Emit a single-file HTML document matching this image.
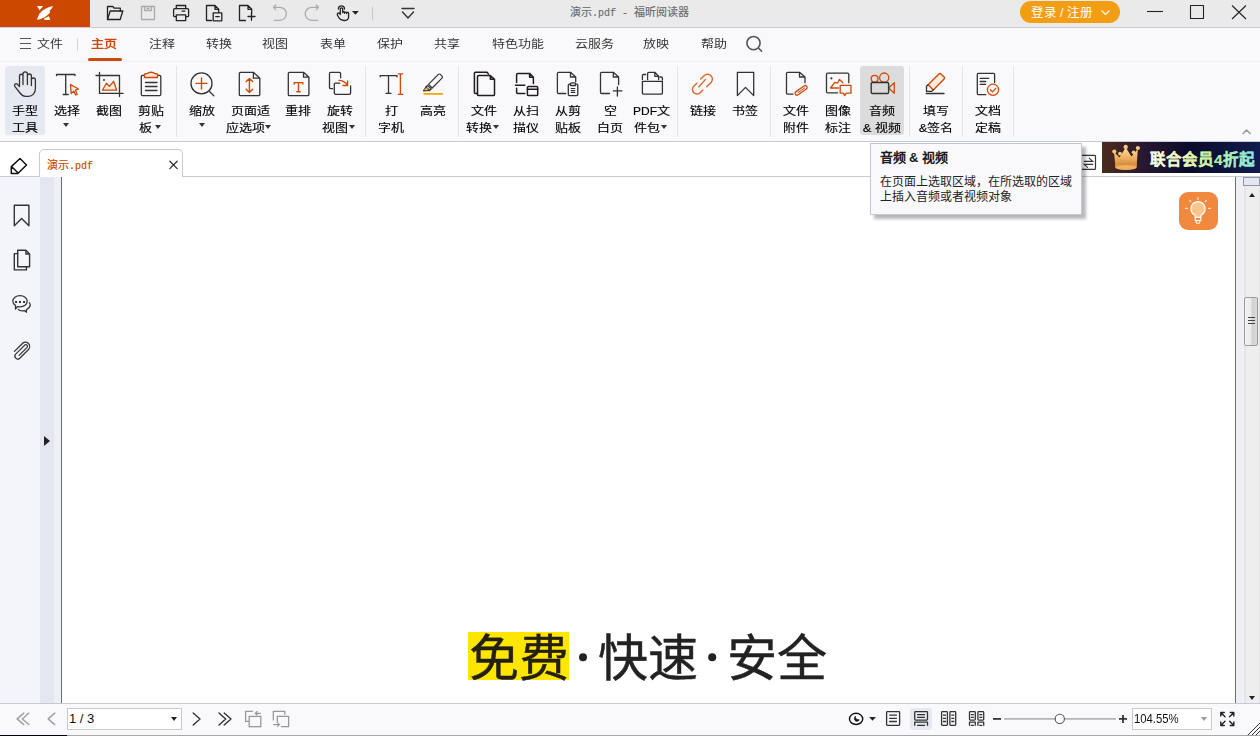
<!DOCTYPE html>
<html lang="zh-CN">
<head>
<meta charset="utf-8">
<style>
*{box-sizing:border-box;margin:0;padding:0}
html,body{width:1260px;height:736px;overflow:hidden;background:#f9f9fb;font-family:"Liberation Sans",sans-serif;color:#222}
.a{position:absolute}
#title{left:0;top:0;width:1260px;height:27px;background:#eaeaea}
#logo{left:0;top:0;width:90px;height:27px;background:#cc4800}
#tline{left:0;top:27px;width:1260px;height:1px;background:#c8ccd6}
#menu{left:0;top:28px;width:1260px;height:33px;background:#f9f9fb}
.mi{position:absolute;top:36px;font-size:13px;line-height:17px;color:#333;white-space:nowrap;font-weight:500;transform:scaleY(0.86)}
#ribbon{left:0;top:62px;width:1260px;height:79px;background:#f9f9fb}
#rline{left:0;top:141px;width:1260px;height:1px;background:#c5cad6}
.hl{position:absolute;top:66px;height:69px;border-radius:3px}
.sep{position:absolute;top:66px;width:1px;height:71px;background:#e3e5ea}
.lb{position:absolute;width:80px;text-align:center;font-size:13px;line-height:17px;color:#000;white-space:nowrap;font-weight:500;transform:scaleY(0.86);-webkit-text-stroke:0.15px #000}
.dd{position:absolute;width:0;height:0;border-left:3.5px solid transparent;border-right:3.5px solid transparent;border-top:4px solid #333}
#tabrow{left:0;top:142px;width:1260px;height:35px;background:#fff}
#tab{left:39px;top:149px;width:144px;height:28px;background:#fff;border:1px solid #c5cbd8;border-bottom:none;border-radius:5px 5px 0 0}
#tabline{left:0;top:176px;width:39px;height:1px;background:#c5cbd8}
#tabline2{left:183px;top:176px;width:1077px;height:1px;background:#c5cbd8}
#lpanel{left:0;top:177px;width:40px;height:526px;background:#f4f5fa}
#lcol{left:40px;top:177px;width:14px;height:526px;background:#e4e7f0}
#lcol2{left:54px;top:177px;width:7px;height:526px;background:#eff0f5}
#pline{left:61px;top:177px;width:1px;height:526px;background:#6e6e6e}
#page{left:62px;top:177px;width:1173px;height:526px;background:#fff}
#pline2{left:1235px;top:177px;width:1px;height:526px;background:#6e6e6e}
#rcol{left:1236px;top:177px;width:7px;height:526px;background:#eff0f5}
#sb{left:1243px;top:177px;width:17px;height:526px;background:linear-gradient(90deg,#f4f4f6 0,#f4f4f6 1px,#e4e4e4 1px,#e4e4e4 3px,#eeeeee 3px,#eeeeee 16px,#e6e6e6 16px)}
#status{left:0;top:703px;width:1260px;height:33px;background:#f9f9fb;border-top:1px solid #c5cad6}
#bot{left:67px;top:735px;width:1193px;height:1px;background:#a8a8a8}
#bot0{left:0;top:735px;width:67px;height:1px;background:#000010}
</style>
</head>
<body>
<div class="a" id="title"></div>
<div class="a" id="logo"></div>
<div class="a" id="tline"></div>
<div class="a" style="left:0;top:28px;width:1260px;height:1px;background:#fff"></div>
<div class="a" id="menu"></div>
<div class="a" id="ribbon"></div>
<div class="a" id="rline"></div>
<div class="a" id="tabrow"></div>
<div class="a" id="tabline"></div>
<div class="a" id="tabline2"></div>
<div class="a" id="tab"></div>
<div class="a" id="lpanel"></div>
<div class="a" id="lcol"></div>
<div class="a" id="lcol2"></div>
<div class="a" id="pline"></div>
<div class="a" id="page"></div>
<div class="a" id="pline2"></div>
<div class="a" id="rcol"></div>
<div class="a" id="sb"></div>
<div class="a" id="status"></div>
<div class="a" id="bot0"></div>
<div class="a" id="bot"></div>
<div class="hl" style="left:5px;width:40px;background:#e6e9f1"></div>
<div class="hl" style="left:860px;width:44px;background:#dcdcdc"></div>
<div class="lb" style="left:-15px;top:103px">手型</div>
<div class="lb" style="left:-15px;top:120px">工具</div>
<div class="lb" style="left:27px;top:103px">选择</div>
<div class="lb" style="left:69px;top:103px">截图</div>
<div class="lb" style="left:111px;top:103px">剪贴</div>
<div class="lb" style="left:162px;top:103px">缩放</div>
<div class="lb" style="left:210px;top:103px">页面适</div>
<div class="lb" style="left:258px;top:103px">重排</div>
<div class="lb" style="left:300px;top:103px">旋转</div>
<div class="lb" style="left:351px;top:103px">打</div>
<div class="lb" style="left:351px;top:120px">字机</div>
<div class="lb" style="left:393px;top:103px">高亮</div>
<div class="lb" style="left:444px;top:103px">文件</div>
<div class="lb" style="left:486px;top:103px">从扫</div>
<div class="lb" style="left:486px;top:120px">描仪</div>
<div class="lb" style="left:528px;top:103px">从剪</div>
<div class="lb" style="left:528px;top:120px">贴板</div>
<div class="lb" style="left:570px;top:103px">空</div>
<div class="lb" style="left:570px;top:120px">白页</div>
<div class="lb" style="left:611.5px;top:103px"><span style="font-size:12px;font-weight:400">PDF</span>文</div>
<div class="lb" style="left:663px;top:103px">链接</div>
<div class="lb" style="left:705px;top:103px">书签</div>
<div class="lb" style="left:756px;top:103px">文件</div>
<div class="lb" style="left:756px;top:120px">附件</div>
<div class="lb" style="left:798px;top:103px">图像</div>
<div class="lb" style="left:798px;top:120px">标注</div>
<div class="lb" style="left:842px;top:103px">音频</div>
<div class="lb" style="left:842px;top:120px">&amp; 视频</div>
<div class="lb" style="left:896px;top:103px">填写</div>
<div class="lb" style="left:896px;top:120px">&amp;签名</div>
<div class="lb" style="left:948px;top:103px">文档</div>
<div class="lb" style="left:948px;top:120px">定稿</div>
<div class="lb" style="left:139px;top:120px;width:auto;text-align:left">板</div>
<div class="dd" style="left:155px;top:125px"></div>
<div class="lb" style="left:226px;top:120px;width:auto;text-align:left">应选项</div>
<div class="dd" style="left:265px;top:125px"></div>
<div class="lb" style="left:322px;top:120px;width:auto;text-align:left">视图</div>
<div class="dd" style="left:349px;top:125px"></div>
<div class="lb" style="left:466px;top:120px;width:auto;text-align:left">转换</div>
<div class="dd" style="left:493px;top:125px"></div>
<div class="lb" style="left:634px;top:120px;width:auto;text-align:left">件包</div>
<div class="dd" style="left:661px;top:125px"></div>
<div class="dd" style="left:63px;top:123px"></div>
<div class="dd" style="left:199px;top:123px"></div>
<div class="mi" style="left:37px;color:#333">文件</div>
<div class="mi" style="left:91px;color:#c94a0a;font-weight:700">主页</div>
<div class="mi" style="left:149px;color:#333">注释</div>
<div class="mi" style="left:206px;color:#333">转换</div>
<div class="mi" style="left:262px;color:#333">视图</div>
<div class="mi" style="left:320px;color:#333">表单</div>
<div class="mi" style="left:377px;color:#333">保护</div>
<div class="mi" style="left:434px;color:#333">共享</div>
<div class="mi" style="left:491.5px;color:#333">特色功能</div>
<div class="mi" style="left:575px;color:#333">云服务</div>
<div class="mi" style="left:643px;color:#333">放映</div>
<div class="mi" style="left:701px;color:#333">帮助</div>
<div class="sep" style="left:176px"></div>
<div class="sep" style="left:365px"></div>
<div class="sep" style="left:458px"></div>
<div class="sep" style="left:677px"></div>
<div class="sep" style="left:770px"></div>
<div class="sep" style="left:909px"></div>
<div class="sep" style="left:962px"></div>
<div class="sep" style="left:1013px"></div>
<div class="a" style="left:1020px;top:1px;width:100px;height:22px;border-radius:11px;background:#f29d12"></div>
<div class="a" style="left:1030.5px;top:5px;font-size:12.5px;line-height:17px;color:#fff;white-space:nowrap">登录 / 注册</div>
<svg class="a" style="left:1100px;top:9px" width="12" height="8"><path d="M1.5,1.5 L5.5,5.5 L9.5,1.5" stroke="#fff" stroke-width="1.2" fill="none"/></svg>
<div class="a" style="left:570px;top:7px;font-size:11px;line-height:12px;color:#6a6a6a;white-space:nowrap;font-family:'Liberation Mono',monospace;-webkit-text-stroke:0.15px currentColor">演示<span style="font-size:10px">.pdf - </span>福昕阅读器</div>
<svg class="a" style="left:0;top:0" width="1260" height="736" viewBox="0 0 1260 736" fill="none" stroke-linecap="round" stroke-linejoin="round">
<!-- logo -->
<g fill="#fff" stroke="none">
<path d="M37.2,20 C38,14 42,8.5 53,6 C51.8,8.8 50.6,10.2 49.3,10.5 C50.2,11 50.3,12 49.5,13.2 C47,16 43,18.5 37.2,20 Z"/>
<path d="M37,6 H43.2 L39.6,10.3 Z"/>
<path d="M44,18.6 L48.8,16.2 L50.4,20 H44.6 Z"/>
</g>
<!-- titlebar icons -->
<g stroke="#222" stroke-width="1.3">
 <path d="M107.5,19.5 V6.5 H112.8 L114.3,8.2 H120.3 V11"/>
 <path d="M107.5,19.5 L110.2,11 H122.8 L120.2,19.5 Z"/>
</g>
<g stroke="#aaa" stroke-width="1.3"><rect x="141.5" y="6.5" width="13" height="13"/><path d="M144.5,6.5 V10.5 H151.5 V6.5"/><path d="M147,8.5 H149"/></g>
<g stroke="#222" stroke-width="1.3">
 <path d="M176.3,8.5 V5.5 H185.7 V8.5"/><rect x="173.6" y="8.6" width="15" height="8" rx="1.2"/><rect x="176.3" y="14.8" width="9.4" height="5.8" fill="#eaeaea"/><path d="M182.2,11.2 H184.8"/>
 <path d="M211.5,20.5 H206.5 V5.5 H215 L218.7,9.3 V12.5 M215,5.5 V9.3 H218.7"/><rect x="213.2" y="12.8" width="8.6" height="8"/><path d="M215.7,16.6 H219.3"/>
 <path d="M245.5,20.5 H239.5 V5.5 H248 L251.7,9.3 V13 M248,5.5 V9.3 H251.7"/><path d="M248,16.5 H255 M251.5,13 V20.3"/>
</g>
<g stroke="#aaa" stroke-width="1.3">
 <path d="M274.2,20.3 H279.9 A6.5,6.5 0 0 0 279.9,7.3 H273.5 M275.8,5 L273.5,7.3 L275.8,9.6"/>
 <path d="M317.8,20.3 H311.7 A6.5,6.5 0 0 1 311.7,7.3 H318.5 M316.2,5 L318.5,7.3 L316.2,9.6"/>
</g>
<g stroke="#222" stroke-width="1.3">
 <path d="M340.3,14.5 V9 A1.2,1.2 0 0 1 342.7,9 V12.8 M342.7,12.5 C342.7,11.4 344.6,11.4 344.6,12.5 V13.3 M344.6,12.8 C344.6,11.9 346.6,11.9 346.6,12.8 V13.5 M346.6,13 C346.6,12.1 348.6,12.1 348.6,13 V17 C348.6,19.2 346.5,20.5 344,20.5 C341.5,20.5 340,19.5 338.8,17.5 L337.4,15 C337,14 337.7,13 338.6,13 C339.3,13 339.8,13.5 340.3,14.5"/>
 <path d="M338.4,9 A3.05,3.05 0 0 1 344.5,9"/>
</g>
<path d="M352,11.1 H358.8 L355.4,14.8 Z" fill="#222"/>
<path d="M372.5,7 V20" stroke="#c8c8c8" stroke-width="1"/>
<g stroke="#333" stroke-width="1.4"><path d="M402,8.5 H414"/><path d="M402.5,12 L408,18 L413.5,12"/></g>
<!-- window controls -->
<g stroke="#222" stroke-width="1.1" stroke-linecap="butt">
<path d="M1147,11.5 H1163"/>
<rect x="1190.5" y="5.5" width="13" height="13"/>
<path d="M1232,5.5 L1246,19 M1246,5.5 L1232,19"/>
</g>
</svg>

<svg class="a" style="left:0;top:28px" width="130" height="34"><g stroke="#555" stroke-width="1.2"><path d="M20,10.5 H31 M20,15.5 H31 M20,20.5 H31"/></g><path d="M77.5,10 V23" stroke="#d5d5d8" stroke-width="1"/></svg>
<div class="a" style="left:88px;top:58px;width:34px;height:3px;border-radius:2px;background:#c94a0a"></div>
<div class="a" style="left:0;top:61px;width:1260px;height:1px;background:#f0f0f2"></div>
<svg class="a" style="left:0;top:0" width="1260" height="736" viewBox="0 0 1260 736" fill="none" stroke-linecap="round" stroke-linejoin="round">
<g stroke="#333" stroke-width="1.3">
<!-- hand -->
<path d="M19.5,86 V76 A1.75,1.75 0 0 1 23,76 V84.5 M23,84.5 V74 A2.2,2.2 0 0 1 27.4,74 V84.5 M27.4,84.5 V76 A2,2 0 0 1 31.4,76 V85.5 M31.4,80 A2,2 0 0 1 35.4,80 V88.5 C35.4,93 32.5,96.3 28.5,96.3 H25.5 C23,96.3 21.5,95 20,93 L14.8,86.3 C13.8,85 15.5,83 17,84 L19.5,86.5"/>
<!-- select T -->
<path d="M56.5,75.5 V74.5 H75 V75.5 M65.7,74.5 V94.5 M63.2,94.5 H68.2"/>
<!-- crop -->
<path d="M99.5,72.5 V93.4 H123 M96,75.5 H119.5 V96.5"/>
</g>
<circle cx="104" cy="80" r="1" fill="#333"/>
<path d="M70.5,84.5 L78.5,89 L75.5,90.2 L77.2,94.2 L75.7,95 L73.8,91.2 L71.2,93.5 Z" fill="#fde9da" stroke="#cc4a0a" stroke-width="1.3"/>
<path d="M102.4,90.2 L106.4,83.2 L109.4,86.4 L113.6,81.3 L116.7,90.2 Z" fill="#fdebdc" stroke="#cc4a0a" stroke-width="1.3"/>
<!-- clipboard -->
<g stroke="#333" stroke-width="1.3">
<path d="M144.3,75.3 H142.5 A1.2,1.2 0 0 0 141.3,76.5 V94.5 A1.2,1.2 0 0 0 142.5,95.6 H159.6 A1.2,1.2 0 0 0 160.8,94.5 V76.5 A1.2,1.2 0 0 0 159.6,75.3 H157.6"/>
<path d="M145.5,82.5 H157 M145.5,86.5 H157 M145.5,90.5 H157"/>
</g>
<path d="M144.5,74.5 C144.5,73.5 146.5,73.5 147.5,73.5 C148,72.2 149.5,72.2 151,72.2 C152.5,72.2 154,72.2 154.5,73.5 C155.5,73.5 157.5,73.5 157.5,74.5 V77.5 H144.5 Z" fill="#fde9da" stroke="#cc4a0a" stroke-width="1.4"/>
<!-- zoom -->
<g stroke="#333" stroke-width="1.3"><circle cx="201.5" cy="83.4" r="10.5"/><path d="M209.5,91.5 L213.8,95.7"/></g>
<path d="M196,83.4 H207 M201.5,78 V89" stroke="#cc4a0a" stroke-width="1.4"/>
<!-- page fit -->
<g stroke="#333" stroke-width="1.3">
<path d="M253.4,72.3 H240.5 A1.2,1.2 0 0 0 239.3,73.5 V94.4 A1.2,1.2 0 0 0 240.5,95.6 H258.6 A1.2,1.2 0 0 0 259.8,94.4 V78.2 Z M253.4,72.3 V78.2 H259.8"/>
<!-- reflow -->
<path d="M303.5,72.3 H289.5 A1.2,1.2 0 0 0 288.3,73.5 V94.4 A1.2,1.2 0 0 0 289.5,95.6 H307.7 A1.2,1.2 0 0 0 308.9,94.4 V77.2 Z M303.5,72.3 V77.2 H308.9"/>
<!-- rotate -->
<path d="M332.7,88.6 H330.7 A1.2,1.2 0 0 1 329.5,87.4 V73.5 A1.2,1.2 0 0 1 330.7,72.3 H339.4 A1.2,1.2 0 0 1 340.6,73.5 V77.8"/>
<path d="M339.7,83.2 H335.5 A1.2,1.2 0 0 0 334.3,84.4 V93.1 A1.2,1.2 0 0 0 335.5,94.3 H349.4 A1.2,1.2 0 0 0 350.6,93.1 V86"/>
</g>
<g stroke="#cc4a0a" stroke-width="1.4">
<path d="M249.4,78.5 V92.2 M246.2,81.6 L249.4,78.4 L252.6,81.6 M246.2,89.2 L249.4,92.4 L252.6,89.2"/>
<path d="M294.2,84 V82.6 H302.8 V84 M298.5,82.6 V91.8 M296.8,91.8 H300.2"/>
<path d="M339,80.4 C342.5,80.4 345.5,82.5 347.5,85.2 M347.6,81 V85.5 H343"/>
</g>
<!-- typewriter -->
<g stroke="#333" stroke-width="1.3"><path d="M380.2,76.8 V75.6 H397 V76.8 M388.5,75.6 V93.4 M386,93.4 H391"/></g>
<path d="M400.4,73.8 V94.4 M398.3,73.8 H402.8 M398.3,94.4 H402.8" stroke="#cc4a0a" stroke-width="1.3"/>
<!-- highlighter -->
<g stroke="#333" stroke-width="1.2">
<path d="M428.5,84.3 L438.3,74.4 A1.4,1.4 0 0 1 440.3,74.4 L442,76.1 A1.4,1.4 0 0 1 442,78.1 L432.2,88 Z"/>
<path d="M427.5,85.3 L431.2,89 L429.5,90.5 L426,87 Z"/>
<path d="M426,87 L423.5,90.8 L429.5,90.5"/>
</g>
<path d="M424.8,89.7 L427.3,88" stroke="#f0a000" stroke-width="1.2"/>
<path d="M423.5,93.9 H443" stroke="#f5a800" stroke-width="1.8" stroke-linecap="butt"/>
<!-- file convert -->
<g stroke="#221c1c" stroke-width="1.5">
<path d="M477.5,93.4 H475.4 A1,1 0 0 1 474.4,92.4 V73.3 A1,1 0 0 1 475.4,72.3 H487 L488.5,74"/>
<path d="M490.3,75.5 H478.7 A1.2,1.2 0 0 0 477.5,76.7 V94.4 A1.2,1.2 0 0 0 478.7,95.6 H493.3 A1.2,1.2 0 0 0 494.5,94.4 V79.3 Z M490.3,75.5 V79.3 H494.5"/>
<!-- scan -->
<path d="M516.6,82.6 V74.6 A1.2,1.2 0 0 1 517.8,73.4 H529.6 L533.4,77.2 V83.6 M529.6,73.4 V77.2 H533.4"/>
<path d="M515.5,85.3 H524.8 M516.6,88.3 V92.2 A1.2,1.2 0 0 0 517.8,93.4 H524.8"/>
<rect x="527.4" y="86.4" width="10.3" height="9.2" rx="1.2"/><path d="M527.4,89.3 H537.7"/>
</g>
<g stroke="#333" stroke-width="1.3">
<!-- from clipboard -->
<path d="M565.7,93.5 H558.6 A1.2,1.2 0 0 1 557.4,92.3 V73.5 A1.2,1.2 0 0 1 558.6,72.3 H570.5 L575.7,77 V81.8 M570.5,72.3 V77 H575.7"/>
<path d="M570,84.2 H569.3 A1,1 0 0 0 568.3,85.2 V94.6 A1,1 0 0 0 569.3,95.6 H576.8 A1,1 0 0 0 577.8,94.6 V85.2 A1,1 0 0 0 576.8,84.2 H576 M570.5,85.5 V83.8 A1,1 0 0 1 571.5,82.8 H574.5 A1,1 0 0 1 575.5,83.8 V85.5 Z"/>
<path d="M571.2,88.5 H574.8 M571.2,90.5 H574.8 M571.2,92.4 H574.8" stroke-width="1.1"/>
<!-- blank page -->
<path d="M609.5,93.5 H601.7 A1.2,1.2 0 0 1 600.5,92.3 V73.5 A1.2,1.2 0 0 1 601.7,72.3 H613.3 L618.6,77 V84.7 M613.3,72.3 V77 H618.6"/>
<path d="M613.3,90.9 H621.9 M617.4,87 V96"/>
<!-- pdf package -->
<path d="M645.7,74.5 H643.6 A1.2,1.2 0 0 0 642.4,75.7 V79.4 M647.6,79.5 V73.5 A1.2,1.2 0 0 1 648.8,72.3 H654.8 L658.6,76.3 V79.5 M654.8,72.3 V76.3 H658.6 M660,77 H661.2 A1.2,1.2 0 0 1 662.4,78.2 V80"/>
<path d="M642.4,81.3 H662.4 V93 A1.2,1.2 0 0 1 661.2,94.2 H643.6 A1.2,1.2 0 0 1 642.4,93 Z"/>
<!-- bookmark -->
<path d="M737.4,72.3 H753.7 V95.6 L745.5,87.4 L737.4,95.6 Z"/>
</g>
<!-- link -->
<g stroke="#d9692a" stroke-width="1.4">
<path d="M700.6,79.1 L704,75.7 A3.1,3.1 0 0 1 711,82.6 L706.8,86.7"/>
<path d="M696.8,83.2 L693.7,86.3 A3.1,3.1 0 0 0 700.4,92.6 L702.8,90"/>
<path d="M698.8,86.8 L705.6,79.4"/>
</g>
<!-- file attach -->
<g stroke="#333" stroke-width="1.3">
<path d="M792.9,94.2 H787.7 A1.2,1.2 0 0 1 786.5,93 V73.5 A1.2,1.2 0 0 1 787.7,72.3 H799.5 L805,77 V82.8 M799.5,72.3 V77 H805"/>
<!-- image annot -->
<path d="M837.6,92.8 H827.7 A1.2,1.2 0 0 1 826.5,91.6 V74.4 A1.2,1.2 0 0 1 827.7,73.2 H847.6 A1.2,1.2 0 0 1 848.8,74.4 V82.8"/>
</g>
<circle cx="831.4" cy="78.3" r="1.1" fill="#333"/>
<g stroke="#cc4a0a" stroke-width="1.3">
<path d="M796.0,91.65 L804.1,85.95 A1.9,1.9 0 0 1 806.3,89.05 L798.2,94.75 A1.9,1.9 0 0 1 796.0,91.65 Z"/>
<path d="M798,92.6 L804.6,88" stroke-width="1"/>
<path d="M838.6,88 H830.5 L834.8,82.3 L837.6,83.2 L839.5,79.4 L842.9,82.8"/>
<path d="M840.2,85.4 H851 V93.2 H846.2 L844.8,95.6 L843.4,93.2 H840.2 Z"/>
</g>
<!-- camera -->
<g stroke="#cc4a0a" stroke-width="1.3">
<circle cx="874.6" cy="78.8" r="3.4"/><circle cx="884.2" cy="77.6" r="4.6"/>
<path d="M888.6,88 L894.3,82.8 V93.2 Z"/>
</g>
<rect x="871.2" y="82.5" width="17.4" height="11" rx="1.2" fill="#d9d9d9" stroke="#333" stroke-width="1.4"/>
<!-- fill sign -->
<path d="M928.1,84.7 L938.9,73.9 A1.4,1.4 0 0 1 940.9,73.9 L944.1,77.1 A1.4,1.4 0 0 1 944.1,79.1 L933.3,89.9 Z" fill="#fdebdc" stroke="#cc4a0a" stroke-width="1.4"/>
<g stroke="#333" stroke-width="1.3">
<path d="M928.1,84.7 L926.5,86.3 V91.4 H931.7 L933.3,89.9"/>
<path d="M926.1,93.5 H944"/>
<!-- doc finalize -->
<path d="M985.8,94.6 H978.3 A1,1 0 0 1 977.3,93.6 V74.4 A1,1 0 0 1 978.3,73.4 H993.6 A1,1 0 0 1 994.6,74.4 V82.7"/>
<path d="M980.2,78.3 H988.8 M980.2,81.5 H985.6 M980.2,84.4 H985.6"/>
</g>
<g stroke="#cc4a0a" stroke-width="1.3"><circle cx="993" cy="89.8" r="5.6"/><path d="M990.4,89.8 L992.5,91.9 L995.8,88.4"/></g>
<!-- collapse chevron -->
<path d="M1243,133.5 L1246.6,130 L1250.2,133.5" stroke="#999" stroke-width="1.5"/>
</svg>

<!-- tab row content -->
<div class="a" style="left:47px;top:160px;font-size:11px;line-height:12px;color:#cc4a00;white-space:nowrap;font-family:'Liberation Mono',monospace;-webkit-text-stroke:0.2px currentColor">演示<span style="font-size:10px">.pdf</span></div>
<svg class="a" style="left:0;top:140px" width="200" height="40" fill="none" stroke-linecap="round" stroke-linejoin="round">
<path d="M20,18.5 L26.5,25 L17.9,33.5 H11.3 V26.6 Z M12,27 L17.9,32.7" stroke="#111" stroke-width="1.5"/>
<path d="M169.8,21.2 L177.2,28.6 M177.2,21.2 L169.8,28.6" stroke="#333" stroke-width="1.3"/>
</svg>
<!-- sidebar icons -->
<svg class="a" style="left:0;top:0" width="40" height="400" fill="none" stroke-linecap="round" stroke-linejoin="round">
<g stroke="#333" stroke-width="1.4">
<path d="M14.3,205.3 H28.9 V225.7 L21.6,218.4 L14.3,225.7 Z"/>
<path d="M17.7,253.6 H14.3 V269.9 H26.4 V266.8"/>
<path d="M25.9,250.3 H17.7 V266.8 H29.6 V254 Z M25.9,250.3 V254 H29.6"/>
</g>
<g stroke="#333" stroke-width="1.25">
<path d="M15.6,305.6 C13.6,304.4 12.8,302.8 12.8,301.3 C12.8,298 16,295.7 20,295.7 C24,295.7 27.2,298 27.2,301.3 C27.2,304.6 24,306.9 20,306.9 C19,306.9 18.2,306.8 17.5,306.6 L15.4,309 Z"/>
<path d="M29.4,302.8 C30,303.5 30.2,304.3 30.2,305 C30.2,306.8 28.8,308.4 26.5,309.5 L26.5,312.2 L24.6,310.6 C22.5,311 19.6,310.7 18.2,309.4"/>
<path d="M14.42,351.43 L22.42,343.44 A4.30,4.30 0 0 1 28.50,349.52 L19.80,358.22 A2.90,2.90 0 0 1 15.70,354.12 L24.75,345.07 A1.65,1.65 0 0 1 27.08,347.40 L19.16,355.32"/>
</g>
<g fill="#333"><rect x="15.1" y="301" width="2" height="2"/><rect x="19" y="301" width="2" height="2"/><rect x="23.1" y="301" width="2" height="2"/></g>
</svg>
<div class="a" style="left:44px;top:436px;width:0;height:0;border-top:5px solid transparent;border-bottom:5px solid transparent;border-left:6px solid #222"></div>
<!-- scrollbar -->
<div class="a" style="left:1243px;top:177px;width:17px;height:9px;background:#e4e7f0;border:1px solid #8f96aa"></div>
<div class="a" style="left:1249px;top:193px;width:0;height:0;border-left:3.5px solid transparent;border-right:3.5px solid transparent;border-bottom:4px solid #222"></div>
<div class="a" style="left:1249px;top:696px;width:0;height:0;border-left:3.5px solid transparent;border-right:3.5px solid transparent;border-top:4px solid #222"></div>
<div class="a" style="left:1244px;top:297px;width:14px;height:49px;border:1px solid #9a9a9a;border-radius:2px;background:linear-gradient(to right,#f4f4f4,#e9e9e9 50%,#d0d0d0 60%,#dadada)"></div>
<svg class="a" style="left:1244px;top:297px" width="14" height="49"><g stroke="#444" stroke-width="1"><path d="M4,20.5 H11 M4,23.5 H11 M4,26.5 H11"/></g></svg>
<!-- lightbulb -->
<div class="a" style="left:1179px;top:192px;width:39px;height:38px;border-radius:9px;background:#f0883e"></div>
<svg class="a" style="left:1179px;top:192px" width="39" height="38" fill="none" stroke-linecap="round">
<path d="M16.2,23.5 A7.2,7.2 0 1 1 21.8,23.5 V25.4 H16.2 Z" fill="#fdc48e" stroke="#fff" stroke-width="1.2" stroke-linejoin="round"/>
<rect x="16.2" y="25.4" width="5.6" height="3.1" fill="#f0883e" stroke="#fff" stroke-width="1.1"/>
<path d="M17.2,28.6 V30.3 Q17.2,31.3 18.2,31.3 H19.8 Q20.8,31.3 20.8,30.3 V28.6" stroke="#fff" stroke-width="1.1"/>
<g stroke="#ffe6cf" stroke-width="1.2"><path d="M19,5.5 V7.3 M10.7,8.5 L11.9,9.7 M27.3,8.5 L26.1,9.7 M6.5,16.3 H8.5 M29.5,16.3 H31.5"/></g>
</svg>
<!-- big text -->
<div class="a" style="left:468px;top:632px;width:101px;height:48px;background:#fee600"></div>
<div class="a" style="left:469px;top:626px;font-size:50px;line-height:66px;font-weight:500;-webkit-text-stroke:0.45px currentColor;color:#231f14;white-space:nowrap">免费</div>
<div class="a" style="left:598px;top:626px;font-size:50px;line-height:66px;font-weight:500;-webkit-text-stroke:0.45px currentColor;color:#222;white-space:nowrap">快速</div>
<div class="a" style="left:726.5px;top:626px;font-size:50px;line-height:66px;font-weight:500;-webkit-text-stroke:0.45px currentColor;color:#222;white-space:nowrap">安全</div>
<svg class="a" style="left:570px;top:645px" width="160" height="25"><circle cx="13" cy="12.3" r="4" fill="#222"/><circle cx="142.2" cy="12.3" r="4" fill="#222"/></svg>
<!-- banner -->
<div class="a" style="left:1102px;top:142px;width:158px;height:31px;background:linear-gradient(90deg,#4b2c1c 0%,#2a1830 25%,#0b0a2a 55%,#101c50 100%)"></div>
<svg class="a" style="left:1102px;top:142px" width="158" height="31">
<defs>
<linearGradient id="gold" x1="0" y1="0" x2="0" y2="1"><stop offset="0" stop-color="#ffdca0"/><stop offset="0.5" stop-color="#f0b060"/><stop offset="1" stop-color="#c87a30"/></linearGradient>
<linearGradient id="txt" x1="0" y1="0" x2="1" y2="0"><stop offset="0" stop-color="#f8f8f0"/><stop offset="0.3" stop-color="#f0f4b8"/><stop offset="0.6" stop-color="#c0f0a0"/><stop offset="1" stop-color="#88e8e0"/></linearGradient>
</defs>
<path d="M13.5,26 L12,10 L17.5,15.5 L23.7,5.5 L29.5,14.5 L35.8,7 L34.5,26 Z" fill="url(#gold)"/>
<circle cx="12.3" cy="9.6" r="2.1" fill="#f8c878"/><circle cx="18" cy="11.7" r="1.9" fill="#f8c878"/><circle cx="23.7" cy="4.9" r="2.2" fill="#f8c878"/>
<circle cx="31.6" cy="10.3" r="1.9" fill="#f8c878"/><circle cx="35.9" cy="6" r="2.1" fill="#f8c878"/>
<path d="M13,21 C18,24 29,24 34.8,21 L34.5,25 C29,28.5 18,28.5 13.3,25.5 Z" fill="#e09040"/>
<ellipse cx="24" cy="25.5" rx="10.5" ry="2.5" fill="#f0b060"/>
<text x="48" y="22.5" font-size="15.5" font-weight="900" fill="url(#txt)" stroke="url(#txt)" stroke-width="0.15" font-family="Liberation Sans, sans-serif">联合会员4折起</text>
</svg>
<!-- swap icon behind tooltip -->
<svg class="a" style="left:1080px;top:150px" width="22" height="22" fill="none" stroke-linecap="round"><path d="M2.2,5.4 H14.5 A1,1 0 0 1 15.5,6.4 V18.4 A1,1 0 0 1 14.5,19.4 H2.2" stroke="#333" stroke-width="1.2"/><path d="M4.2,11.4 H12.7 L9.3,8.2 M12.7,14.4 H4.2 L7.5,17.4" stroke="#333" stroke-width="1.1"/></svg>
<!-- tooltip -->
<div class="a" style="left:874px;top:147px;width:212px;height:72px;background:rgba(0,0,0,0.28);filter:blur(1.5px)"></div>
<div class="a" style="left:870px;top:143px;width:212px;height:72px;background:#f9f9fc;border:1px solid #c4c6d0"></div>
<div class="a" style="left:879.5px;top:150.5px;font-size:13px;line-height:14px;font-weight:bold;color:#1a1a1a;white-space:nowrap">音频 &amp; 视频</div>
<div class="a" style="left:880px;top:175px;font-size:12px;line-height:14.5px;color:#222;white-space:nowrap">在页面上选取区域，在所选取的区域<br>上插入音频或者视频对象</div>
<!-- status bar -->
<div class="a" style="left:67px;top:708px;width:115px;height:22px;background:#fff;border:1px solid #c5cad8"></div>
<div class="a" style="left:69px;top:711px;font-size:13px;line-height:16px;color:#111;white-space:nowrap">1 / 3</div>
<div class="a" style="left:171px;top:717px;width:0;height:0;border-left:3.5px solid transparent;border-right:3.5px solid transparent;border-top:4px solid #222"></div>
<svg class="a" style="left:0;top:700px" width="300" height="36" fill="none" stroke-linecap="round" stroke-linejoin="round">
<g stroke="#a0a0a0" stroke-width="1.4"><path d="M23.8,13.1 L17.1,18.9 L23.8,24.6 M28.8,13.1 L22.4,18.9 L28.8,24.6 M54.8,13.1 L48.1,18.9 L54.8,24.6"/></g>
<g stroke="#333" stroke-width="1.4"><path d="M193.2,13 L200,19 L193.2,25 M219,13 L225.7,19 L219,25 M224.2,13 L231,19 L224.2,25"/></g>
<g stroke="#999" stroke-width="1.3" stroke-linecap="butt" stroke-linejoin="miter">
<path d="M252.9,11.4 H245.6 V21.4 H249.2"/><rect x="249.2" y="16.4" width="11.6" height="10.3"/><path d="M261,13.3 H255.4 M257.4,11.3 L255.4,13.3 L257.4,15.3"/>
<path d="M273.3,20.5 V11.4 H284.8 V14.8"/><path d="M277.3,22.4 V16.4 H288.6 V26.7 H281"/><path d="M273.3,24.6 H279.3 M277.3,22.6 L279.3,24.6 L277.3,26.6"/>
</g>
</svg>
<div class="a" style="left:910px;top:708px;width:22px;height:22px;border-radius:3px;background:#e6e9f1"></div>
<svg class="a" style="left:840px;top:700px" width="420" height="36" fill="none" stroke-linejoin="round">
<ellipse cx="16.1" cy="18.9" rx="6.6" ry="5.6" stroke="#111" stroke-width="1.4"/>
<path d="M15.3,16.2 C13.4,18.3 14.6,21.6 17.4,21.3 C18.4,21.2 19,20.5 19.1,19.6 C17.2,20.2 15.2,18.8 15.3,16.2 Z" fill="#111" stroke="#111" stroke-width="0.6"/>
<path d="M29.2,17.1 H35.9 L32.55,20.8 Z" fill="#222"/>
<g stroke="#333" stroke-width="1.3">
<rect x="46.6" y="11.7" width="13" height="13.6" rx="0.8"/><path d="M49.2,15.2 H56.9 M49.2,18.4 H56.9 M49.2,21.5 H56.9"/>
<rect x="74.7" y="11.7" width="12.8" height="8.4" rx="0.8"/><path d="M77.1,14.6 H85 M77.1,17.4 H85"/><path d="M74.7,25.7 V22.2 H87.5 V25.7 M77.1,25.4 H85"/>
<rect x="101.6" y="11.7" width="5.8" height="13.6" rx="0.8"/><rect x="109.9" y="11.7" width="5.8" height="13.6" rx="0.8"/>
<path d="M103,15.2 H106 M103,18.4 H106 M103,21.5 H106 M111.3,15.2 H114.3 M111.3,18.4 H114.3 M111.3,21.5 H114.3"/>
<rect x="129.5" y="11.7" width="5.8" height="8.4" rx="0.8"/><rect x="137.9" y="11.7" width="5.8" height="8.4" rx="0.8"/>
<path d="M130.9,14.6 H133.9 M130.9,17.4 H133.9 M139.3,14.6 H142.3 M139.3,17.4 H142.3"/>
<path d="M129.5,25.7 V22.2 H135.3 V25.7 M137.9,25.7 V22.2 H143.7 V25.7 M130.9,25.4 H133.9 M139.3,25.4 H142.3"/>
</g>
<path d="M153,18.9 H161" stroke="#333" stroke-width="1.8"/>
<path d="M164,18.9 H276" stroke="#b5b5b5" stroke-width="1.6"/>
<circle cx="219.8" cy="18.9" r="4.6" fill="#fff" stroke="#555" stroke-width="1.1"/>
<path d="M279,18.9 H287 M283,14.9 V22.9" stroke="#333" stroke-width="1.8"/>
</svg>
<div class="a" style="left:1132px;top:708px;width:80px;height:22px;background:#fff;border:1px solid #c5cad8"></div>
<div class="a" style="left:1134px;top:711px;font-size:13px;line-height:16px;color:#111;white-space:nowrap;transform:scaleX(0.87);transform-origin:0 50%">104.55%</div>
<div class="a" style="left:1201px;top:717px;width:0;height:0;border-left:3.5px solid transparent;border-right:3.5px solid transparent;border-top:4px solid #999"></div>
<svg class="a" style="left:1210px;top:700px" width="50" height="36" fill="none" stroke-linecap="round" stroke-linejoin="round">
<g stroke="#222" stroke-width="1.4">
<path d="M10.8,12.5 L15,16.7 M10.8,12.5 V16 M10.8,12.5 H14.3"/>
<path d="M23.8,12.5 L19.6,16.7 M23.8,12.5 V16 M23.8,12.5 H20.3"/>
<path d="M10.8,25.5 L15,21.3 M10.8,25.5 V22 M10.8,25.5 H14.3"/>
<path d="M23.8,25.5 L19.6,21.3 M23.8,25.5 V22 M23.8,25.5 H20.3"/>
</g>
<g stroke="#333" stroke-width="1"><path d="M38,35 L50,23 M42,35 L50,27 M46,35 L50,31"/></g>
</svg>

<svg class="a" style="left:730px;top:28px" width="40" height="34" fill="none" stroke="#555" stroke-width="1.6" stroke-linecap="round"><circle cx="23.5" cy="15.1" r="6.6"/><path d="M28.6,20.2 L31.6,23.2"/></svg>
<!--CONTENT-->
</body>
</html>
